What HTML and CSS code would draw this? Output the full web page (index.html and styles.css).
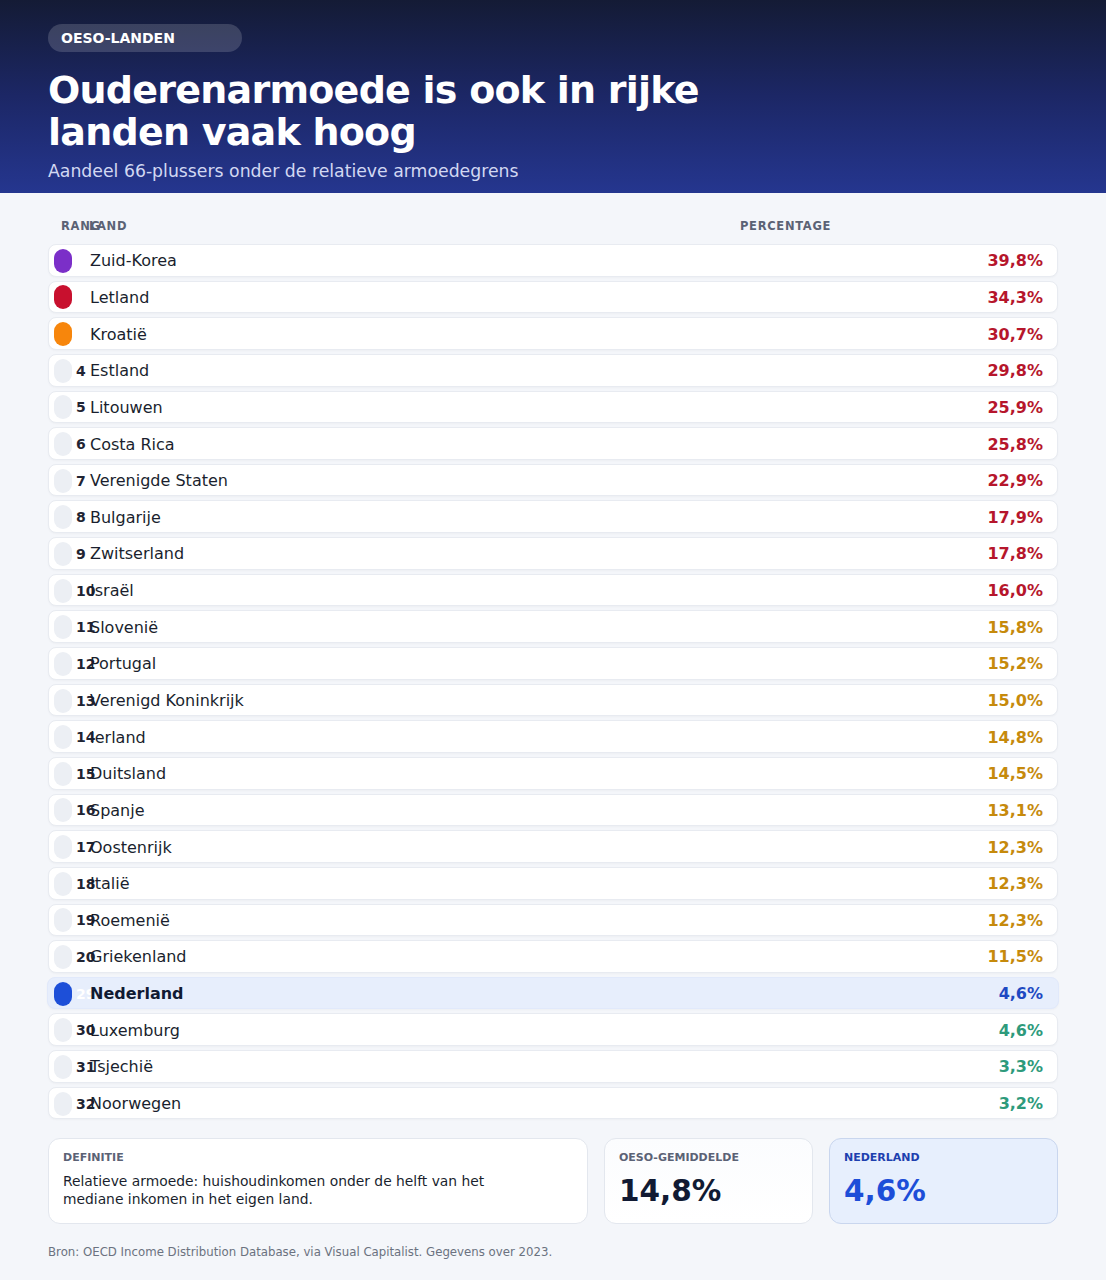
FILE: index.html
```html
<!DOCTYPE html>
<html lang="nl">
<head>
<meta charset="utf-8">
<title>Ouderenarmoede</title>
<link rel="stylesheet" href="styles.css">
</head>
<body>
<header class="hero">
  <div class="tag">OESO-LANDEN</div>
  <h1 class="title">Ouderenarmoede is ook in rijke landen vaak hoog</h1>
  <p class="subtitle">Aandeel 66-plussers onder de relatieve armoedegrens</p>
</header>
<main class="content">
  <div class="thead">
    <span>RANG</span><span>LAND</span><span>PERCENTAGE</span>
  </div>
  <div class="rows">
    <div class="row"><div class="rank"><span class="dot purple"></span><span class="num white">1</span></div><div class="name">Zuid-Korea</div><div class="val red">39,8%</div></div>
    <div class="row"><div class="rank"><span class="dot crimson"></span><span class="num white">2</span></div><div class="name">Letland</div><div class="val red">34,3%</div></div>
    <div class="row"><div class="rank"><span class="dot orange"></span><span class="num white">3</span></div><div class="name">Kroatië</div><div class="val red">30,7%</div></div>
    <div class="row"><div class="rank"><span class="dot"></span><span class="num">4</span></div><div class="name">Estland</div><div class="val red">29,8%</div></div>
    <div class="row"><div class="rank"><span class="dot"></span><span class="num">5</span></div><div class="name">Litouwen</div><div class="val red">25,9%</div></div>
    <div class="row"><div class="rank"><span class="dot"></span><span class="num">6</span></div><div class="name">Costa Rica</div><div class="val red">25,8%</div></div>
    <div class="row"><div class="rank"><span class="dot"></span><span class="num">7</span></div><div class="name">Verenigde Staten</div><div class="val red">22,9%</div></div>
    <div class="row"><div class="rank"><span class="dot"></span><span class="num">8</span></div><div class="name">Bulgarije</div><div class="val red">17,9%</div></div>
    <div class="row"><div class="rank"><span class="dot"></span><span class="num">9</span></div><div class="name">Zwitserland</div><div class="val red">17,8%</div></div>
    <div class="row"><div class="rank"><span class="dot"></span><span class="num">10</span></div><div class="name">Israël</div><div class="val red">16,0%</div></div>
    <div class="row"><div class="rank"><span class="dot"></span><span class="num">11</span></div><div class="name">Slovenië</div><div class="val amber">15,8%</div></div>
    <div class="row"><div class="rank"><span class="dot"></span><span class="num">12</span></div><div class="name">Portugal</div><div class="val amber">15,2%</div></div>
    <div class="row"><div class="rank"><span class="dot"></span><span class="num">13</span></div><div class="name">Verenigd Koninkrijk</div><div class="val amber">15,0%</div></div>
    <div class="row"><div class="rank"><span class="dot"></span><span class="num">14</span></div><div class="name">Ierland</div><div class="val amber">14,8%</div></div>
    <div class="row"><div class="rank"><span class="dot"></span><span class="num">15</span></div><div class="name">Duitsland</div><div class="val amber">14,5%</div></div>
    <div class="row"><div class="rank"><span class="dot"></span><span class="num">16</span></div><div class="name">Spanje</div><div class="val amber">13,1%</div></div>
    <div class="row"><div class="rank"><span class="dot"></span><span class="num">17</span></div><div class="name">Oostenrijk</div><div class="val amber">12,3%</div></div>
    <div class="row"><div class="rank"><span class="dot"></span><span class="num">18</span></div><div class="name">Italië</div><div class="val amber">12,3%</div></div>
    <div class="row"><div class="rank"><span class="dot"></span><span class="num">19</span></div><div class="name">Roemenië</div><div class="val amber">12,3%</div></div>
    <div class="row"><div class="rank"><span class="dot"></span><span class="num">20</span></div><div class="name">Griekenland</div><div class="val amber">11,5%</div></div>
    <div class="row row-nl"><div class="rank"><span class="dot blue"></span><span class="num white">29</span></div><div class="name strong">Nederland</div><div class="val blue-text">4,6%</div></div>
    <div class="row"><div class="rank"><span class="dot"></span><span class="num">30</span></div><div class="name">Luxemburg</div><div class="val green">4,6%</div></div>
    <div class="row"><div class="rank"><span class="dot"></span><span class="num">31</span></div><div class="name">Tsjechië</div><div class="val green">3,3%</div></div>
    <div class="row"><div class="rank"><span class="dot"></span><span class="num">32</span></div><div class="name">Noorwegen</div><div class="val green">3,2%</div></div>
  </div>
  <section class="cards">
    <div class="card">
      <div class="label">DEFINITIE</div>
      <p class="def">Relatieve armoede: huishoudinkomen onder de helft van het mediane inkomen in het eigen land.</p>
    </div>
    <div class="card stat">
      <div class="label">OESO-GEMIDDELDE</div>
      <div class="big">14,8%</div>
    </div>
    <div class="card stat card-nl">
      <div class="label label-nl">NEDERLAND</div>
      <div class="big big-nl">4,6%</div>
    </div>
  </section>
  <p class="source">Bron: OECD Income Distribution Database, via Visual Capitalist. Gegevens over 2023.</p>
</main>
</body>
</html>
```
FILE: styles.css
```css
* { box-sizing: border-box; }
html, body { margin: 0; padding: 0; }
body {
  background: #f4f6fa;
  font-family: "DejaVu Sans", "Noto Sans", sans-serif;
  color: #1a1f2e;
  width: 1106px;
  min-height: 1280px;
}
.hero {
  background: linear-gradient(180deg, #141b35 0%, #1c2766 50%, #25368f 100%);
  padding: 24px 48px 11px;
  height: 193px;
}
.tag {
  display: inline-block;
  width: 194px;
  height: 28px;
  line-height: 28px;
  border-radius: 14px;
  background: rgba(255, 255, 255, 0.16);
  color: #ffffff;
  font-weight: 700;
  font-size: 14px;
  padding-left: 13px;
}
.title {
  margin: 17px 0 0;
  font-size: 38px;
  line-height: 42px;
  font-weight: 700;
  letter-spacing: -0.02em;
  color: #ffffff;
  max-width: 700px;
}
.subtitle {
  margin: 7px 0 0;
  font-size: 17.3px;
  line-height: 22px;
  color: #d2d8f2;
}
.content {
  padding: 25px 48px 0;
}
.thead {
  display: grid;
  grid-template-columns: 20px 1fr 303px;
  column-gap: 8px;
  padding: 0 15px 0 13px;
  font-size: 11.5px;
  line-height: 16px;
  font-weight: 700;
  letter-spacing: 0.06em;
  color: #5b6275;
  height: 16px;
  margin-bottom: 10px;
}
.rows {
  display: flex;
  flex-direction: column;
  gap: 4px;
}
.row {
  display: grid;
  grid-template-columns: 28px 1fr 303px;
  column-gap: 8px;
  align-items: center;
  height: 32.65px;
  padding: 1px 14px 0 5px;
  background: #ffffff;
  border: 1px solid #e8ebf1;
  border-radius: 8px;
  box-shadow: 0 1px 2px rgba(16, 24, 40, 0.03);
}
.rank {
  display: flex;
  align-items: center;
  gap: 4px;
  white-space: nowrap;
}
.dot {
  flex: none;
  width: 18px;
  height: 24px;
  border-radius: 9px;
  background: #eceff4;
}
.dot.purple { background: #7b2fc8; }
.dot.crimson { background: #c8102e; }
.dot.orange { background: #f7860c; }
.dot.blue { background: #1d4fd8; }
.num {
  font-size: 14px;
  font-weight: 700;
  color: #1f2433;
}
.num.white { color: #ffffff; }
.name {
  font-size: 16px;
  color: #1a1f2e;
  white-space: nowrap;
}
.name.strong {
  font-weight: 700;
  color: #111a33;
}
.val {
  text-align: right;
  font-size: 16px;
  font-weight: 700;
}
.val.red { color: #b6162c; }
.val.amber { color: #c68a0c; }
.val.green { color: #2e9a7b; }
.val.blue-text { color: #1e49c2; }
.row-nl {
  background: #e7eefc;
  border-color: #e1e9fb;
  margin: 0 -1px;
  padding: 1px 15px 0 6px;
}
.cards {
  display: grid;
  grid-template-columns: 540px 1fr 229px;
  column-gap: 16px;
  margin-top: 19px;
}
.card {
  height: 86px;
  background: #ffffff;
  border: 1px solid #e3e7ee;
  border-radius: 12px;
  padding: 12px 14px 0;
}
.card.stat {
  background: linear-gradient(180deg, #fbfcfe 0%, #ffffff 100%);
}
.card.card-nl {
  background: #e7effd;
  border-color: #c9d6ee;
}
.label {
  font-size: 11px;
  line-height: 14px;
  font-weight: 700;
  letter-spacing: 0;
  color: #5b6275;
}
.label-nl { color: #1e40af; }
.def {
  margin: 7px 0 0;
  font-size: 13.85px;
  line-height: 18px;
  color: #1a1f2e;
  max-width: 460px;
}
.big {
  margin-top: 8px;
  font-size: 29.5px;
  line-height: 36px;
  font-weight: 700;
  color: #111a33;
}
.big-nl { color: #1d4ed8; }
.source {
  margin: 21px 0 0;
  font-size: 11.75px;
  line-height: 15px;
  color: #6b7280;
}
```
